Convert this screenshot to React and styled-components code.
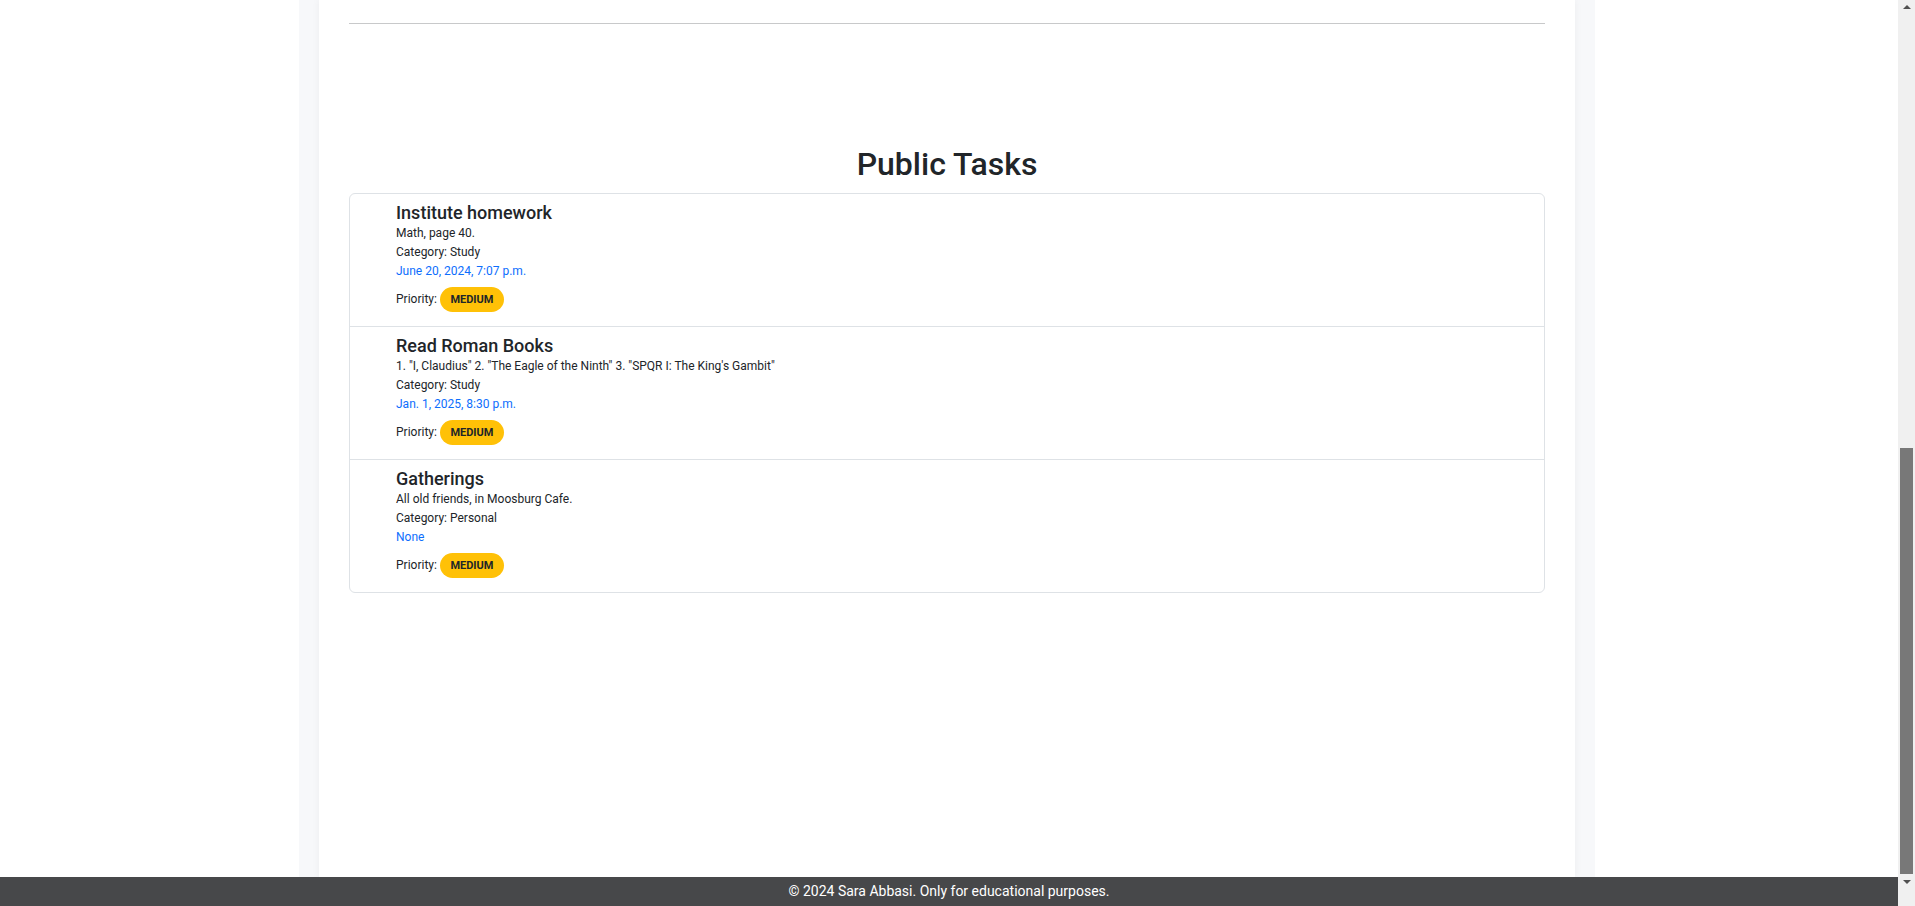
import React from "react";
import styled, { createGlobalStyle } from "styled-components";

const GlobalStyle = createGlobalStyle`
  html, body, #root { height: 100%; }
  body {
    margin: 0;
    background: #ffffff;
    font-family: Roboto, "Liberation Sans", Arial, sans-serif;
    color: #212529;
    overflow: hidden;
  }
`;

const Page = styled.div`
  height: 100vh;
  display: grid;
  grid-template-columns: 1fr 17px;
  grid-template-rows: 1fr 29px;
`;

const Stage = styled.div`
  grid-column: 1;
  grid-row: 1;
  display: flex;
  justify-content: center;
  padding-right: 4px;
  min-height: 0;
`;

const Shell = styled.div`
  width: 1256px;
  padding: 0 20px;
  background: #f7f8fa;
  display: flex;
`;

const Sheet = styled.main`
  flex: 1;
  background: #ffffff;
  box-shadow: 0 0 8px rgba(0, 0, 0, 0.05);
  padding: 23px 30px 0;
`;

const Rule = styled.hr`
  margin: 0;
  border: 0;
  border-top: 1px solid #c8c9ca;
`;

const Heading = styled.h2`
  margin: 121px 0 9.6px;
  font-size: 32px;
  line-height: 1.2;
  font-weight: 500;
  text-align: center;
  color: #212529;
`;

const TaskList = styled.ul`
  list-style: none;
  margin: 0;
  padding: 0;
  border: 1px solid #dee2e6;
  border-radius: 6px;
`;

const TaskItem = styled.li`
  padding: 8px 16px 14px 46px;
  border-top: ${(p) => (p.$first ? "0" : "1px solid #dee2e6")};
`;

const TaskTitle = styled.h5`
  margin: 0;
  font-size: 18px;
  line-height: 22px;
  font-weight: 500;
  color: #212529;
`;

const Line = styled.p`
  margin: 0;
  font-size: 12px;
  line-height: 19px;
  color: ${(p) => (p.$accent ? "#0d6efd" : "#212529")};
`;

const PriorityRow = styled.div`
  margin-top: 6px;
  height: 25px;
  display: flex;
  align-items: center;
  gap: 3px;
  font-size: 12px;
  color: #212529;
`;

const Badge = styled.span`
  display: inline-flex;
  align-items: center;
  justify-content: center;
  height: 25px;
  padding: 0 10.5px;
  border-radius: 13px;
  background: #ffc107;
  color: #212529;
  font-size: 11px;
  font-weight: 700;
`;

const Footer = styled.footer`
  grid-column: 1;
  grid-row: 2;
  background: #47484a;
  color: #ffffff;
  font-size: 14px;
  line-height: 29px;
  text-align: center;
`;

const ScrollTrack = styled.aside`
  grid-column: 2;
  grid-row: 1 / 3;
  background: #f0f0f0;
  display: flex;
  flex-direction: column;
  align-items: center;
  padding: 5px 2px 22px;
`;

const ScrollArrow = styled.span`
  width: 0;
  height: 0;
  border-left: 4.5px solid transparent;
  border-right: 4.5px solid transparent;
  ${(p) =>
    p.$down
      ? "border-top: 4px solid #505050; margin-top: 6px;"
      : "border-bottom: 4px solid #505050;"}
`;

const ScrollThumb = styled.span`
  align-self: stretch;
  margin-top: auto;
  background: #787878;
`;

const tasks = [
  {
    title: "Institute homework",
    description: "Math, page 40.",
    category: "Study",
    due: "June 20, 2024, 7:07 p.m.",
    priority: "MEDIUM",
  },
  {
    title: "Read Roman Books",
    description:
      '1. "I, Claudius" 2. "The Eagle of the Ninth" 3. "SPQR I: The King\'s Gambit"',
    category: "Study",
    due: "Jan. 1, 2025, 8:30 p.m.",
    priority: "MEDIUM",
  },
  {
    title: "Gatherings",
    description: "All old friends, in Moosburg Cafe.",
    category: "Personal",
    due: "None",
    priority: "MEDIUM",
  },
];

export default function App() {
  return (
    <>
      <GlobalStyle />
      <Page>
        <Stage>
          <Shell>
            <Sheet>
              <Rule />
              <Heading>Public Tasks</Heading>
              <TaskList>
                {tasks.map((t, i) => (
                  <TaskItem key={t.title} $first={i === 0}>
                    <TaskTitle>{t.title}</TaskTitle>
                    <Line>{t.description}</Line>
                    <Line>Category: {t.category}</Line>
                    <Line $accent>{t.due}</Line>
                    <PriorityRow>
                      Priority: <Badge>{t.priority}</Badge>
                    </PriorityRow>
                  </TaskItem>
                ))}
              </TaskList>
            </Sheet>
          </Shell>
        </Stage>
        <Footer>© 2024 Sara Abbasi. Only for educational purposes.</Footer>
        <ScrollTrack aria-hidden="true">
          <ScrollArrow />
          <ScrollThumb style={{ height: 426 }} />
          <ScrollArrow $down />
        </ScrollTrack>
      </Page>
    </>
  );
}
